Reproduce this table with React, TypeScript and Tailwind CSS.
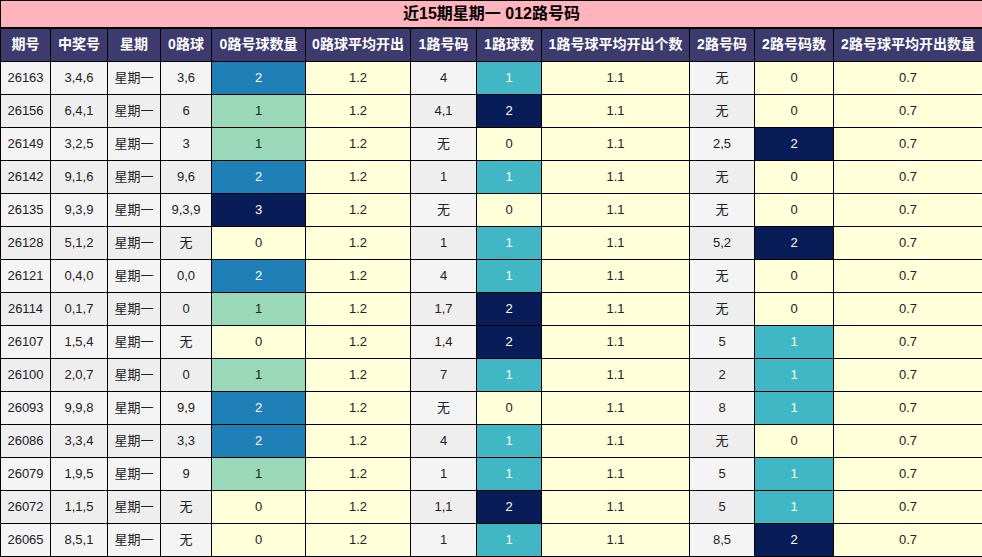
import React from "react";

type Row = [string, string, string, number, string, number, string, number];

const ROWS: Row[] = [
  ["26163", "3,4,6", "3,6", 2, "4", 1, "无", 0],
  ["26156", "6,4,1", "6", 1, "4,1", 2, "无", 0],
  ["26149", "3,2,5", "3", 1, "无", 0, "2,5", 2],
  ["26142", "9,1,6", "9,6", 2, "1", 1, "无", 0],
  ["26135", "9,3,9", "9,3,9", 3, "无", 0, "无", 0],
  ["26128", "5,1,2", "无", 0, "1", 1, "5,2", 2],
  ["26121", "0,4,0", "0,0", 2, "4", 1, "无", 0],
  ["26114", "0,1,7", "0", 1, "1,7", 2, "无", 0],
  ["26107", "1,5,4", "无", 0, "1,4", 2, "5", 1],
  ["26100", "2,0,7", "0", 1, "7", 1, "2", 1],
  ["26093", "9,9,8", "9,9", 2, "无", 0, "8", 1],
  ["26086", "3,3,4", "3,3", 2, "4", 1, "无", 0],
  ["26079", "1,9,5", "9", 1, "1", 1, "5", 1],
  ["26072", "1,1,5", "无", 0, "1,1", 2, "5", 1],
  ["26065", "8,5,1", "无", 0, "1", 1, "8,5", 2],
];

const HEADERS = ["期号", "中奖号", "星期", "0路球", "0路号球数量", "0路球平均开出", "1路号码", "1路球数", "1路号球平均开出个数", "2路号码", "2路号码数", "2路号球平均开出数量"];
const WIDTHS = ["w-[50px]", "w-[57px]", "w-[53px]", "w-[51px]", "w-[94px]", "w-[105px]", "w-[66px]", "w-[65px]", "w-[148px]", "w-[65px]", "w-[79px]", "w-[149px]"];

// scale for the 0路 count (max 3)
const ZERO_SCALE: Record<number, string> = {
  0: "bg-[#ffffd9] text-[#222]",
  1: "bg-[#99d8b9] text-[#222]",
  2: "bg-[#1f80b8] text-white",
  3: "bg-[#081d58] text-white",
};
// scale for 1路 / 2路 counts (max 2)
const PAIR_SCALE: Record<number, string> = {
  0: "bg-[#ffffd9] text-[#222]",
  1: "bg-[#41b6c4] text-white",
  2: "bg-[#081d58] text-white",
};

const cell = "border border-black text-center h-[33px] p-0";

export default function App() {
  return (
    <div className="w-[982px] h-[557px] overflow-hidden bg-white" style={{ fontFamily: '"Liberation Sans", "Noto Sans CJK SC", sans-serif' }}>
      <table className="table-fixed border-collapse w-[982px] text-[13px] text-[#222]">
        <colgroup>
          {WIDTHS.map((w, i) => <col key={i} className={w} />)}
        </colgroup>
        <thead>
          <tr>
            <th colSpan={12} className="h-[27px] p-0 bg-[#ffb3bd] border border-black border-b-2 text-[16px] font-bold text-black">近15期星期一 012路号码</th>
          </tr>
          <tr>
            {HEADERS.map((h) => (
              <th key={h} className="h-[34px] p-0 bg-[#3d3a6e] border border-black text-white text-[14px] font-bold whitespace-nowrap">{h}</th>
            ))}
          </tr>
        </thead>
        <tbody>
          {ROWS.map((r, i) => {
            const gray = i % 2 === 0 ? "bg-[#f4f4f4]" : "bg-[#eeeeee]";
            return (
              <tr key={r[0]}>
                <td className={`${cell} ${gray}`}>{r[0]}</td>
                <td className={`${cell} ${gray}`}>{r[1]}</td>
                <td className={`${cell} ${gray}`}>星期一</td>
                <td className={`${cell} ${gray}`}>{r[2]}</td>
                <td className={`${cell} ${ZERO_SCALE[r[3]]}`}>{r[3]}</td>
                <td className={`${cell} bg-[#ffffd9]`}>1.2</td>
                <td className={`${cell} ${gray}`}>{r[4]}</td>
                <td className={`${cell} ${PAIR_SCALE[r[5]]}`}>{r[5]}</td>
                <td className={`${cell} bg-[#ffffd9]`}>1.1</td>
                <td className={`${cell} ${gray}`}>{r[6]}</td>
                <td className={`${cell} ${PAIR_SCALE[r[7]]}`}>{r[7]}</td>
                <td className={`${cell} bg-[#ffffd9]`}>0.7</td>
              </tr>
            );
          })}
        </tbody>
      </table>
    </div>
  );
}
